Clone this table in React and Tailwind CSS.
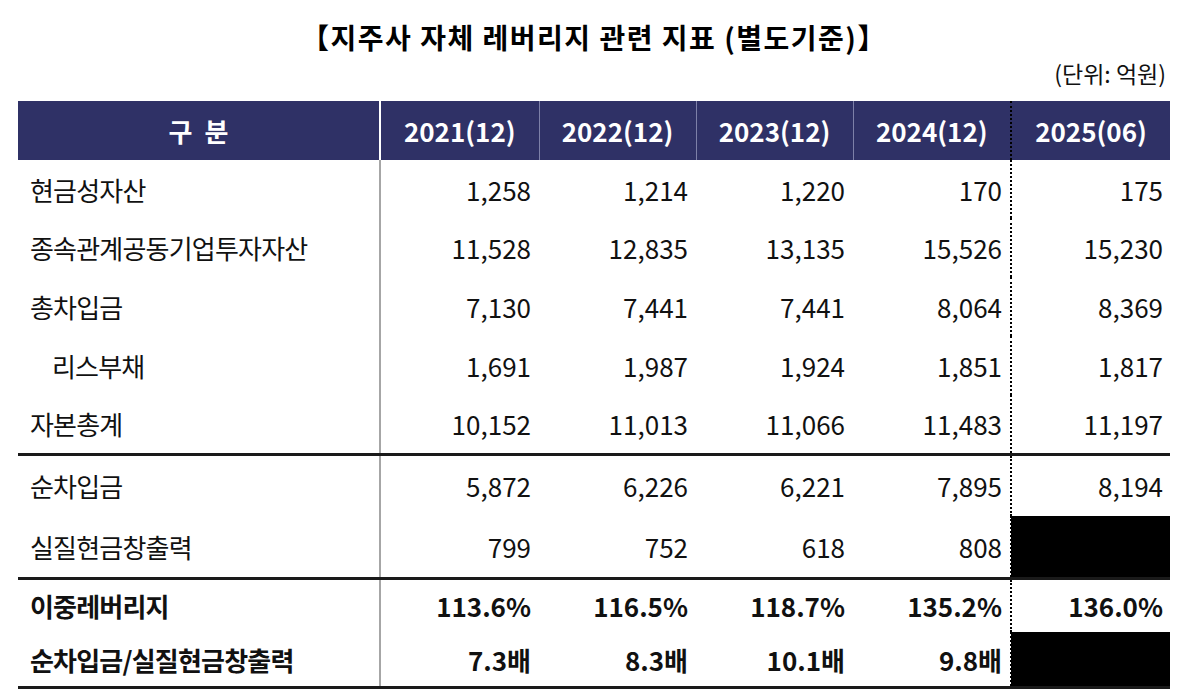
const font = { fontFamily: '"Noto Sans CJK KR", "Noto Sans", sans-serif' };

const years = ["2021(12)", "2022(12)", "2023(12)", "2024(12)", "2025(06)"];

const topRows = [
  { label: "현금성자산", values: ["1,258", "1,214", "1,220", "170", "175"] },
  { label: "종속관계공동기업투자자산", values: ["11,528", "12,835", "13,135", "15,526", "15,230"] },
  { label: "총차입금", values: ["7,130", "7,441", "7,441", "8,064", "8,369"] },
  { label: "리스부채", values: ["1,691", "1,987", "1,924", "1,851", "1,817"], indent: true },
  { label: "자본총계", values: ["10,152", "11,013", "11,066", "11,483", "11,197"] },
];

const midRows = [
  { label: "순차입금", values: ["5,872", "6,226", "6,221", "7,895", "8,194"] },
  { label: "실질현금창출력", values: ["799", "752", "618", "808", null] },
];

const bottomRows = [
  { label: "이중레버리지", values: ["113.6%", "116.5%", "118.7%", "135.2%", "136.0%"] },
  { label: "순차입금/실질현금창출력", values: ["7.3배", "8.3배", "10.1배", "9.8배", null] },
];

const Row = ({ row, height, bold, borderTop }) => (
  <tr className={`${borderTop ? "border-t-[3px] border-[#1a1a1a]" : ""} ${bold ? "font-bold" : ""}`}>
    <td
      className={`${row.indent ? "pl-[34px]" : "pl-[12px]"} border-r-2 border-r-[#a6a6a6] text-left tracking-[-0.8px]`}
      style={{ height }}
    >
      {row.label}
    </td>
    {row.values.map((v, i) => (
      <td
        key={i}
        className={`text-right ${i === 4 ? "border-l-2 border-dotted border-l-black pr-[7px]" : "pr-[8px]"} ${
          v === null ? "bg-black" : ""
        }`}
      >
        {v}
      </td>
    ))}
  </tr>
);

export default function App() {
  return (
    <div className="min-h-screen w-[1190px] bg-white text-[#111]" style={font}>
      <div className="pl-[18px] pr-[20px] pt-[17px]">
        <h1 className="text-center text-[28px] font-bold leading-[40px] tracking-[1.5px] text-black">
          【지주사 자체 레버리지 관련 지표 (별도기준)】
        </h1>
        <p className="pr-[4px] text-right text-[23px] leading-[32px]">(단위: 억원)</p>
        <table className="mt-[12px] w-[1152px] table-fixed border-collapse text-[26px]">
          <colgroup>
            <col className="w-[362px]" />
            <col className="w-[159px]" />
            <col className="w-[157px]" />
            <col className="w-[157px]" />
            <col className="w-[158px]" />
            <col className="w-[159px]" />
          </colgroup>
          <thead>
            <tr className="h-[59px] bg-[#2f3166] text-[26px] font-bold text-white">
              <th className="border-r-2 border-r-white">
                <span className="mr-[12px]">구</span>분
              </th>
              {years.map((y, i) => (
                <th
                  key={y}
                  className={i === 4 ? "border-l-2 border-dotted border-l-black" : i < 3 ? "border-r border-r-[#7d80a8]" : ""}
                >
                  {y}
                </th>
              ))}
            </tr>
          </thead>
          <tbody>
            {topRows.map((r, i) => (
              <Row key={r.label} row={r} height={i === 0 ? 58 : 59} />
            ))}
            {midRows.map((r, i) => (
              <Row key={r.label} row={r} height={62} borderTop={i === 0} />
            ))}
            {bottomRows.map((r, i) => (
              <Row key={r.label} row={r} height={54} bold borderTop={i === 0} />
            ))}
          </tbody>
        </table>
        <div className="h-[3px] w-[1152px] bg-[#1a1a1a]" />
      </div>
    </div>
  );
}
